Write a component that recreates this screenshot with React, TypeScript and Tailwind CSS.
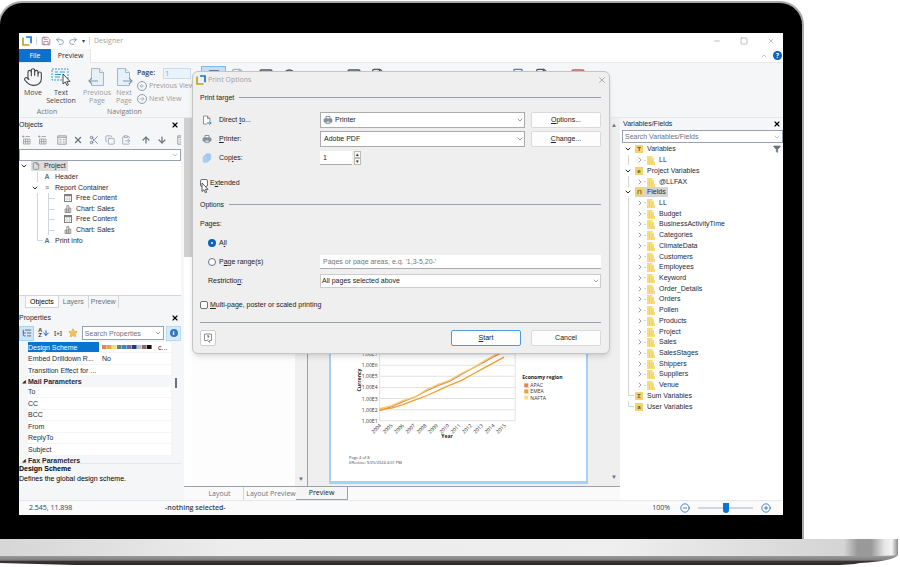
import React from 'react'
import {
  ArrowDown,
  ArrowLeft,
  ArrowRight,
  ArrowUp,
  ChevronDown,
  ChevronRight,
  ChevronUp,
  CirclePlus,
  CircleMinus,
  ClipboardPaste,
  Copy,
  File,
  Funnel,
  Hand,
  ListTree,
  Minus,
  Printer,
  Redo2,
  Save,
  Scissors,
  Search,
  Square,
  Star,
  Undo2,
  X
} from 'lucide-react'

const Logo: React.FC<{ className?: string }> = ({ className }) => (
  <svg viewBox="0 0 10 10" className={className} aria-hidden="true">
    <path d="M1 1.600V9h6.500" fill="none" stroke="#b3ab1e" strokeWidth="1.700" />
    <path d="M4 1h5v6.200" fill="none" stroke="#1478d4" strokeWidth="1.700" />
  </svg>
)

const PageArrow: React.FC<{ back?: boolean }> = ({ back }) => (
  <svg viewBox="0 0 18 20" className="h-5 w-[18px]" fill="#e6f0f8" stroke="#9db9cf" aria-hidden="true">
    <path d={back ? 'M3.5 11V1.5h8l4 4v13h-12V17' : 'M14.500 11V5.500l-4-4h-8v17h12V17'} />
    <path d={back ? 'M11.500 1.500v4h4' : 'M10.500 1.500v4h4'} />
    <path
      d={back ? 'M10 14H1m3-3-3 3 3 3' : 'M8 14h9m-3-3 3 3-3 3'}
      fill="none"
      stroke="#7f97aa"
      strokeWidth="1.2"
    />
  </svg>
)

const Cursor: React.FC<{ className?: string }> = ({ className }) => (
  <svg viewBox="0 0 8 12" className={className} aria-hidden="true">
    <path d="M1 1v8.500l2-1.700 1.400 3 1.300-.6-1.300-2.900H7z" fill="#fff" stroke="#333" strokeWidth=".8" />
  </svg>
)

const TextSelectIcon = () => (
  <svg viewBox="0 0 20 20" className="h-5 w-5" aria-hidden="true">
    <rect x="1" y="2" width="16" height="11" fill="#eef6fd" stroke="#3b97dc" strokeDasharray="2 1" />
    <path d="M4 5h3M9 5h5M4 7.500h6M4 10h5" stroke="#3b97dc" />
    <path d="M12 7v10l2.300-2 1.600 3.500 1.500-.7-1.600-3.400H19z" fill="#fff" stroke="#333" strokeWidth=".9" />
  </svg>
)

const PrinterIcon = () => (
  <svg viewBox="0 0 10 10" className="size-2.5 shrink-0" aria-hidden="true">
    <path d="M3 4V1.500h4V4" fill="#fff" stroke="#777" strokeWidth=".8" />
    <rect x="1" y="3.800" width="8" height="3.500" rx="1" fill="#8b9aa6" stroke="#65727c" strokeWidth=".6" />
    <path d="M3 6h4v2.600H3z" fill="#bfdcf3" stroke="#777" strokeWidth=".6" />
  </svg>
)

const PageExportIcon = () => (
  <svg viewBox="0 0 10 10" className="size-2.5 shrink-0" aria-hidden="true">
    <path d="M5 9H1.500V1H5.500L8 3.500V6M5.500 1v2.500H8" fill="#fff" stroke="#777" strokeWidth=".8" />
    <path d="M5 8h4M7.500 6.300 9.200 8 7.500 9.700" fill="none" stroke="#1d76c4" strokeWidth=".9" />
  </svg>
)

const CopiesIcon = () => (
  <svg viewBox="0 0 10 10" className="size-2.5 shrink-0" fill="#a9cff3" stroke="#8dbdec" strokeWidth=".4" aria-hidden="true">
    <rect x="3.800" y=".6" width="5" height="6.500" rx="1.500" />
    <rect x="2.400" y="1.800" width="5" height="6.500" rx="1.500" />
    <rect x="1" y="3" width="5" height="6.500" rx="1.500" />
  </svg>
)

const FolderIcon = () => (
  <svg viewBox="0 0 8 10" className="h-2.5 w-2 shrink-0" aria-hidden="true">
    <path d="M0 1h5.500v2H7v4h1v3H0z" fill="#f9dc7b" />
    <path d="M2.500 3v6M5 5v4.500" stroke="#efc65a" strokeWidth=".7" />
  </svg>
)

const TableIcon = () => (
  <svg viewBox="0 0 8 8" className="size-2 shrink-0" aria-hidden="true">
    <rect x=".5" y=".5" width="7" height="7" fill="#fff" stroke="#808080" />
    <path d="M.5 1.500h7" stroke="#808080" strokeWidth="1.500" />
    <path d="M3 2v5.500M5.500 2v5.500M1 5h6" stroke="#bcbcbc" strokeWidth=".6" />
  </svg>
)

const BarsIcon = () => (
  <svg viewBox="0 0 8 8" className="size-2 shrink-0" fill="#eee" stroke="#777" strokeWidth=".7" aria-hidden="true">
    <path d="M1 4h1.800v3.500H1zM2.800.6h2v6.900h-2zM4.800 3h2v4.500h-2z" />
  </svg>
)

const InsertIcon = () => (
  <svg viewBox="0 0 10 10" className="size-2.5 shrink-0" fill="none" stroke="#999" strokeWidth=".8" aria-hidden="true">
    <path d="M1 1.500h2.500M2.200.4v2.300M4.500 1.500H9M2.500 4h6.500v5H2.500zM4.500 4v5M6.700 4v5M2.500 6.500H9" />
  </svg>
)

const FormIcon = () => (
  <svg viewBox="0 0 10 10" className="size-2.5 shrink-0" fill="none" stroke="#8c8c8c" strokeWidth=".8" aria-hidden="true">
    <path d="M.8.8h8.400v8.400H.8zM.8 2.300h8.400M2.500 4.700h2M2.500 7h2M5.800 4.700h2M5.800 7h2" />
  </svg>
)

interface FieldNode {
  label: string
  glyph?: string
  depth: number
  open?: boolean
  selected?: boolean
}

const tables = [
  'LL',
  'Budget',
  'BusinessActivityTime',
  'Categories',
  'ClimateData',
  'Customers',
  'Employees',
  'Keyword',
  'Order_Details',
  'Orders',
  'Pollen',
  'Products',
  'Project',
  'Sales',
  'SalesStages',
  'Shippers',
  'Suppliers',
  'Venue'
]

const fieldNodes: FieldNode[] = [
  { label: 'Variables', glyph: 'T', depth: 0, open: true },
  { label: 'LL', depth: 1 },
  { label: 'Project Variables', glyph: 'e', depth: 0, open: true },
  { label: '@LLFAX', depth: 1 },
  { label: 'Fields', glyph: '⊓', depth: 0, open: true, selected: true },
  ...tables.map((label) => ({ label, depth: 1 })),
  { label: 'Sum Variables', glyph: 'Σ', depth: 0 },
  { label: 'User Variables', glyph: 'a', depth: 0 }
]

const reportNodes = [
  { label: 'Free Content', icon: <TableIcon /> },
  { label: 'Chart: Sales', icon: <BarsIcon /> },
  { label: 'Free Content', icon: <TableIcon /> },
  { label: 'Chart: Sales', icon: <BarsIcon /> }
]

const swatches = ['#e5825c', '#f0a22e', '#f7dc6f', '#6f7f7a', '#2f86d1', '#7d6a94', '#173f87', '#b9bdc2', '#8a6a6c', '#111111']

const years = ['2004', '2005', '2006', '2007', '2008', '2009', '2010', '2011', '2012', '2013', '2014', '2015']

const TitleBar = () => (
  <header className="flex h-4 shrink-0 items-center bg-white pl-[3px] text-[#a0a0a0]">
    <Logo className="size-2.5" />
    <span className="ml-1 h-2 border-l border-gray-300" />
    <button aria-label="Save" className="ml-1"><Save className="size-2.5 text-[#a5708c]" /></button>
    <button aria-label="Undo" className="ml-1"><Undo2 className="size-2.5 text-[#7c93b5]" /></button>
    <button aria-label="Redo" className="ml-[3px]"><Redo2 className="size-2.5 text-[#7c93b5]" /></button>
    <span className="ml-1 text-[6px] text-gray-700">▾</span>
    <span className="ml-1 h-2 border-l border-gray-300" />
    <h1 className="ml-1 font-['Open_Sans',sans-serif] text-[7px]">Designer</h1>
    <div className="ml-auto flex gap-[19px] pr-2">
      <button aria-label="Minimize"><Minus className="size-2" /></button>
      <button aria-label="Maximize"><Square className="size-2" /></button>
      <button aria-label="Close"><X className="size-2" /></button>
    </div>
  </header>
)

const Tabs = () => (
  <nav className="flex h-3.5 shrink-0 border-b border-gray-200 bg-white font-['Open_Sans',sans-serif]">
    <button className="w-8 bg-[#0f6fca] text-white">File</button>
    <button className="-mb-px w-10 border-r border-gray-200 bg-[#f5f6f7] text-gray-800">Preview</button>
    <div className="ml-auto flex items-center gap-[5px] pr-px">
      <button aria-label="Collapse ribbon"><ChevronUp className="size-2 text-gray-400" /></button>
      <button aria-label="Help" className="flex size-[9px] items-center justify-center rounded-full bg-[#0b63bd] text-[7px] font-bold leading-none text-white">?</button>
    </div>
  </nav>
)

const RibbonButton: React.FC<{ icon: React.ReactNode; label: string; disabled?: boolean; className: string }> = ({
  icon,
  label,
  disabled,
  className
}) => (
  <button className={`flex flex-col items-center leading-2 ${disabled ? 'text-[#9a9a9a]' : 'text-[#444]'} ${className}`}>
    {icon}
    <span className="mt-0.5">{label}</span>
  </button>
)

const Ribbon = () => (
  <section className="flex h-[55px] shrink-0 border-b border-gray-200 bg-[#f4f6f8] pt-1 font-['Open_Sans',sans-serif] text-[7px]">
    <div className="flex flex-col">
      <div className="flex">
        <RibbonButton className="w-7" label="Move" icon={<Hand className="size-5 text-[#444]" strokeWidth={1.3} />} />
        <RibbonButton className="w-7" label="Text Selection" icon={<TextSelectIcon />} />
      </div>
      <p className="mt-auto text-center leading-[11px] text-[#777]">Action</p>
    </div>
    <div className="ml-2 flex w-[110px] shrink-0 flex-col">
      <div className="flex">
        <RibbonButton disabled className="w-7 px-1" label="Previous Page" icon={<PageArrow back />} />
        <RibbonButton disabled className="w-7 px-1" label="Next Page" icon={<PageArrow />} />
        <div className="flex flex-1 flex-col">
          <label className="flex h-3 items-center font-semibold text-gray-700">
            Page:
            <input className="ml-2 h-[11px] w-7 border border-[#c9dcee] bg-[#eaf2fa] px-px font-normal text-[#8fa3b5]" defaultValue="1" />
          </label>
          <button className="flex h-[13px] items-center gap-0.5 whitespace-nowrap text-[#9a9a9a]">
            <span className="rounded-full border border-[#8ba0b0] p-px"><ArrowLeft className="size-1.5 text-[#6d8496]" /></span>
            Previous View
          </button>
          <button className="flex h-[13px] items-center gap-0.5 whitespace-nowrap text-[#9a9a9a]">
            <span className="rounded-full border border-[#8ba0b0] p-px"><ArrowRight className="size-1.5 text-[#6d8496]" /></span>
            Next View
          </button>
        </div>
      </div>
      <p className="mt-auto pl-6 leading-[11px] text-[#777]">Navigation</p>
    </div>
    <div className="-mt-px ml-2 flex h-5 items-start text-gray-600">
      <span className="flex h-5 w-[25px] justify-center border border-[#7fb7e6] bg-[#c3e0f8] pt-0.5"><Square className="size-3.5" /></span>
      <File className="ml-1 mt-0.5 size-4 text-[#9db9cf]" />
      <Square className="ml-3 mt-0.5 size-4" />
      <Search className="ml-2 mt-0.5 size-4" />
      <Square className="ml-12 mt-0.5 size-4" />
      <File className="ml-2 mt-0.5 size-4" />
      <Printer className="ml-31 mt-0.5 size-4 text-[#5a7ba8]" />
      <File className="ml-2 mt-0.5 size-4" />
      <Square className="ml-5 mt-0.5 size-4 text-[#b9645a]" />
    </div>
  </section>
)

const PanelTitle: React.FC<{ title: string }> = ({ title }) => (
  <div className="flex h-3 shrink-0 items-center justify-between pr-0.5 text-gray-800">
    <h2>{title}</h2>
    <button aria-label={`Close ${title}`}><X className="size-2 text-black" strokeWidth={3.5} /></button>
  </div>
)

const ObjectTree = () => (
  <ul className="grid h-[85px] auto-rows-fr leading-[10px] text-gray-800">
    <li className="flex items-center pl-px">
      <ChevronDown className="size-2" strokeWidth={3} />
      <span className="ml-[3px] flex h-[10px] items-center gap-1 bg-[#dcdcdc] pl-px pr-0.5">
        <File className="size-2 text-gray-500" />
        Project
      </span>
    </li>
    <li className="flex items-center pl-[18px]">
      <span className="h-full w-1.5 border-l border-gray-300" />
      <span className="w-2 text-center font-bold text-gray-500">A</span>
      <span className="ml-1">Header</span>
    </li>
    <li className="flex items-center pl-3">
      <ChevronDown className="size-2" strokeWidth={3} />
      <span className="ml-1 w-2 text-center font-bold text-gray-500">≡</span>
      <span className="ml-1">Report Container</span>
    </li>
    {reportNodes.map((node, i) => (
      <li key={i} className="flex items-center pl-[18px]">
        <span className="h-full w-[11px] border-l border-gray-300" />
        <span className="h-full w-4 border-l border-gray-300"><span className="mt-[5px] block w-1.5 border-t border-gray-300" /></span>
        {node.icon}
        <span className="ml-1">{node.label}</span>
      </li>
    ))}
    <li className="flex items-center pl-[18px]">
      <span className="h-1/2 w-1.5 self-start border-b border-l border-gray-300" />
      <span className="w-2 text-center font-bold text-gray-500">A</span>
      <span className="ml-1">Print info</span>
    </li>
  </ul>
)

const ObjectsPanel = () => (
  <section className="flex min-h-0 flex-1 flex-col">
    <PanelTitle title="Objects" />
    <div className="flex h-[18px] shrink-0 items-center gap-1.5 overflow-hidden pl-0.5 text-gray-400">
      <InsertIcon />
      <InsertIcon />
      <span className="ml-1"><FormIcon /></span>
      <X className="size-2.5 shrink-0 text-gray-500" strokeWidth={3} />
      <Scissors className="size-2.5 shrink-0 text-gray-500" />
      <Copy className="size-2.5 shrink-0" />
      <ClipboardPaste className="size-2.5 shrink-0" />
      <ArrowUp className="ml-1 size-2.5 shrink-0 text-gray-500" strokeWidth={3} />
      <ArrowDown className="size-2.5 shrink-0 text-gray-500" strokeWidth={3} />
      <span className="ml-1"><FormIcon /></span>
    </div>
    <div className="flex min-h-0 flex-1 flex-col bg-white">
      <div className="relative h-3 shrink-0 border border-gray-400">
        <select aria-label="Object filter" className="block size-full appearance-none bg-white" />
        <ChevronDown className="pointer-events-none absolute right-px top-px size-2 text-gray-400" />
      </div>
      <ObjectTree />
    </div>
    <div className="flex h-[13px] shrink-0 border-t border-gray-300 pl-1.5 text-gray-500">
      <button className="border-x border-b border-gray-300 bg-white px-1 text-black">Objects</button>
      <button className="border-r border-gray-300 px-1">Layers</button>
      <button className="border-r border-gray-300 px-0.5">Preview</button>
    </div>
  </section>
)

const mailRows = ['To', 'CC', 'BCC', 'From', 'ReplyTo', 'Subject']

const PropertiesPanel = () => (
  <section className="mt-1 flex shrink-0 flex-col">
    <PanelTitle title="Properties" />
    <div className="flex h-[18px] items-center">
      <button aria-label="Group by category" className="flex h-[15px] w-[15px] items-center justify-center border border-[#a9d1f2] bg-[#cde6fa]">
        <ListTree className="size-2.5 text-gray-600" />
      </button>
      <button aria-label="Sort" className="ml-1 flex items-center font-bold text-gray-700">
        <span className="text-[6px] leading-[5px]">A<br />Z</span>
        <ArrowDown className="size-2 text-[#1d5fa8]" strokeWidth={3} />
      </button>
      <button className="ml-1 text-[6px] font-bold text-gray-700">[+]</button>
      <button aria-label="Favorites" className="ml-1.5"><Star className="size-2.5 fill-[#f0c25b] text-[#e2b250]" /></button>
      <div className="relative ml-1 h-3.5 min-w-0 flex-1">
        <input aria-label="Search Properties" placeholder="Search Properties" className="size-full border border-gray-400 bg-white px-0.5 placeholder:text-gray-500" />
        <ChevronDown className="absolute right-0.5 top-[3px] size-2 text-gray-500" />
      </div>
      <button aria-label="Info" className="ml-0.5 flex h-[15px] w-[15px] items-center justify-center border border-[#b9daf5] bg-[#d6eafa]">
        <span className="flex size-2 items-center justify-center rounded-full bg-[#2f79bd] font-['Liberation_Serif',serif] text-[7px] font-bold leading-none text-white">i</span>
      </button>
    </div>
    <div className="flex h-[121px] overflow-hidden">
      <div className="min-w-0 flex-1">
        <table className="h-[124px] w-full table-fixed border-collapse leading-[9px] text-gray-800">
          <tbody>
            <tr>
              <td className="w-[9px] p-0" />
              <td className="w-[71px] whitespace-nowrap border-b border-gray-100 bg-[#0a74d1] p-0 text-white">Design Scheme</td>
              <td className="border-b border-gray-100 bg-white p-0 pl-[3px]">
                <span className="flex items-center">
                  {swatches.map((color) => (
                    <span key={color} className="h-1 w-[5px] border-r border-white/40" style={{ backgroundColor: color }} />
                  ))}
                  <span className="ml-1.5">c...</span>
                </span>
              </td>
            </tr>
            <tr>
              <td className="p-0" />
              <td className="whitespace-nowrap border-b border-gray-100 bg-white p-0">Embed Drilldown R...</td>
              <td className="border-b border-gray-100 bg-white p-0 pl-[3px]">No</td>
            </tr>
            <tr>
              <td className="p-0" />
              <td className="whitespace-nowrap border-b border-gray-100 bg-white p-0">Transition Effect for ...</td>
              <td className="border-b border-gray-100 bg-white p-0" />
            </tr>
            <tr>
              <td className="p-0 text-center text-[5px]">◢</td>
              <td colSpan={2} className="p-0 font-bold">Mail Parameters</td>
            </tr>
            {mailRows.map((label) => (
              <tr key={label}>
                <td className="p-0" />
                <td className="border-b border-gray-100 bg-white p-0">{label}</td>
                <td className="border-b border-gray-100 bg-white p-0" />
              </tr>
            ))}
            <tr>
              <td className="p-0 text-center text-[5px]">◢</td>
              <td colSpan={2} className="p-0 font-bold">Fax Parameters</td>
            </tr>
          </tbody>
        </table>
      </div>
      <div className="w-2.5 pl-1 pt-9"><div className="h-2.5 w-0.5 bg-gray-500" /></div>
    </div>
    <div className="h-[37px] border-t border-gray-200 leading-[10px]">
      <p className="font-bold text-black">Design Scheme</p>
      <p>Defines the global design scheme.</p>
    </div>
  </section>
)

const Chart = () => (
  <svg viewBox="0 0 252 94" className="w-full font-['Open_Sans',sans-serif]" role="img" aria-label="Sales by economy region">
    <g stroke="#e2e2e2" strokeWidth="1">
      {[2, 13, 24, 35, 46, 57, 68].map((y) => (
        <line key={y} x1="48" x2="182" y1={y} y2={y} />
      ))}
      <line x1="48" x2="48" y1="0" y2="68" />
      <line x1="182" x2="182" y1="0" y2="68" />
    </g>
    <g fontSize="5" fill="#333" textAnchor="end">
      {['1.00E7', '1.00E6', '1.00E5', '1.00E4', '1.00E3', '1.00E2', '1.00E1'].map((t, i) => (
        <text key={t} x="46" y={4 + i * 11}>{t}</text>
      ))}
      {years.map((t, i) => (
        <text key={t} transform={`translate(${50 + i * 11.2} 73) rotate(-45)`}>{t}</text>
      ))}
    </g>
    <g fontSize="5" fontWeight="700" fill="#222">
      <text transform="translate(30 39) rotate(-90)">Currency</text>
      <text x="109" y="85">Year</text>
      <text x="189" y="27">Economy region</text>
    </g>
    <g fill="none" strokeWidth="1.3">
      <path d="M48 58 60 54 71 49 84 44 95 38 106 33 117 29 129 22 140 16 151 10 162 4 170 0" stroke="#e5825c" />
      <path d="M48 56 60 53 71 48 84 44 95 37 106 32 117 28 129 21 140 16 151 9 162 3 168 0" stroke="#f3ce6a" />
      <path d="M48 57 60 55.500 71 52 84 47 95 43 106 38 117 33 129 28 140 22 151 16 162 10 171 5" stroke="#efa02c" />
    </g>
    <g fontSize="5" fill="#333">
      <rect x="191" y="31" width="4" height="4" fill="#e5825c" />
      <text x="197" y="35">APAC</text>
      <rect x="191" y="37" width="4" height="4" fill="#efa02c" />
      <text x="197" y="41">EMEA</text>
      <rect x="191" y="43" width="4" height="4" fill="#f7dc8a" />
      <text x="197" y="47">NAFTA</text>
    </g>
  </svg>
)

const Workspace = () => (
  <main className="flex min-w-0 flex-1 flex-col">
    <div className="flex min-h-0 flex-1 border-b border-gray-400">
      <div className="w-2 bg-white"><div className="h-[139px] bg-[#cfcfcf]" /></div>
      <div className="flex w-[103px] shrink-0 bg-[#fdfdfd]" />
      <div className="flex w-[13px] shrink-0 items-end justify-center border-r border-gray-400 bg-[#f1f1f1] pb-1 text-[6px] leading-none text-gray-500">▼</div>
      <div className="flex min-w-0 flex-1 bg-[#efefef] pb-0.5 pl-[21px]">
        <div className="flex flex-1 flex-col justify-end border-x-2 border-b-[3px] border-[#a9d0f2] bg-white">
          <Chart />
          <div className="mb-4 mt-2 pl-[18px] font-['Open_Sans',sans-serif] text-[4px] leading-[5px] text-gray-700">
            <p>Page 4 of 8</p>
            <p>Effective: 9/25/2024 4:01 PM</p>
          </div>
        </div>
        <div className="flex w-8 flex-col items-end justify-between py-1 pr-[3px] text-[6px] leading-none text-gray-500">
          <span>▲</span>
          <span>▼</span>
        </div>
      </div>
    </div>
    <div className="flex h-[13px] shrink-0 bg-[#fafafa] pl-1 font-['Open_Sans',sans-serif] text-gray-500">
      <button className="w-14 border-r border-gray-300 pl-2">Layout</button>
      <button className="w-[52px] whitespace-nowrap pl-0.5">Layout Preview</button>
      <button className="w-[52px] border-b border-r border-gray-400 bg-[#f5f5f5] text-gray-900">Preview</button>
    </div>
  </main>
)

const FieldsPanel = () => (
  <aside className="flex w-[163px] shrink-0 flex-col bg-white text-gray-800">
    <div className="bg-[#f4f6f8] pl-[3px]"><PanelTitle title="Variables/Fields" /></div>
    <div className="relative ml-0.5 h-[13px] shrink-0">
      <input aria-label="Search Variables/Fields" placeholder="Search Variables/Fields" className="block size-full border border-gray-400 bg-white px-0.5 placeholder:text-gray-500" />
      <ChevronDown className="absolute right-0.5 top-[3px] size-2 text-gray-400" />
    </div>
    <div className="relative pt-px">
      <Funnel className="absolute right-0.5 top-0.5 size-2 fill-gray-500 text-gray-500" />
      <ul className="grid h-[268px] auto-rows-fr pl-1 leading-[10px]">
        {fieldNodes.map((node, i) => (
          <li key={i} className="flex items-center">
            {node.depth === 0 ? (
              <>
                <span className="flex h-full w-2.5 items-center">
                  {node.open ? (
                    <ChevronDown className="size-2" strokeWidth={3} />
                  ) : (
                    <span className="ml-1 h-1/2 w-1.5 self-start border-b border-l border-gray-300" />
                  )}
                </span>
                <span className={`ml-px flex h-2.5 items-center gap-1 pr-0.5 ${node.selected ? 'bg-[#d4d4d8]' : ''}`}>
                  <span className="flex h-2 w-2 items-center justify-center bg-[#f9d265] text-[6px] font-bold leading-none text-gray-600">{node.glyph}</span>
                  {node.label}
                </span>
              </>
            ) : (
              <>
                <span className="ml-1 h-full w-2 border-l border-gray-300" />
                <ChevronRight className="size-2 text-gray-500" />
                <span className="mr-px w-0.5 border-t border-gray-300" />
                <FolderIcon />
                <span className="ml-1">{node.label}</span>
              </>
            )}
          </li>
        ))}
      </ul>
    </div>
  </aside>
)

const StatusBar = () => (
  <footer className="flex h-[15px] shrink-0 items-center border-t border-gray-200 bg-[#fafafa] font-['Open_Sans',sans-serif] text-gray-700">
    <span className="w-32 pl-2.5">2.545, 11.898</span>
    <span className="pl-[18px] font-semibold">-nothing selected-</span>
    <div className="ml-auto flex items-center pr-3">
      <span>100%</span>
      <button aria-label="Zoom out" className="ml-2.5"><CircleMinus className="size-2.5 text-[#2a6fb8]" /></button>
      <input
        type="range"
        aria-label="Zoom"
        defaultValue={50}
        className="mx-2 h-0.5 w-[55px] appearance-none bg-gray-300 [&::-webkit-slider-thumb]:h-2.5 [&::-webkit-slider-thumb]:w-1.5 [&::-webkit-slider-thumb]:appearance-none [&::-webkit-slider-thumb]:rounded-b-sm [&::-webkit-slider-thumb]:bg-[#0a74d1]"
      />
      <button aria-label="Zoom in"><CirclePlus className="size-2.5 text-[#2a6fb8]" /></button>
    </div>
  </footer>
)

const GroupHeading: React.FC<{ children: React.ReactNode }> = ({ children }) => (
  <div className="flex h-[19px] items-center gap-[5px]">
    <h3>{children}</h3>
    <span className="flex-1 border-t border-gray-400" />
  </div>
)

const FormRow: React.FC<{ children: React.ReactNode }> = ({ children }) => (
  <div className="flex h-[19px] items-center">{children}</div>
)

const DialogButton: React.FC<{ children: React.ReactNode; primary?: boolean; className?: string }> = ({
  children,
  primary,
  className = ''
}) => (
  <button
    className={`h-4 w-[70px] shrink-0 rounded-xs border bg-[#fdfdfd] ${primary ? 'border-[#4b9be0]' : 'border-[#dadada]'} ${className}`}
  >
    {children}
  </button>
)

const PrintDialog = () => (
  <div
    role="dialog"
    aria-label="Print Options"
    className="absolute left-[173px] top-[38px] w-[418px] rounded-md border border-[#c4c4c4] bg-[#efefef] pb-[7px] pl-[7px] pr-2 text-[#222] shadow-md"
  >
    <div className="-ml-1 -mr-1.5 flex h-4 items-center">
      <Logo className="size-2.5" />
      <h2 className="ml-0.5 font-['Open_Sans',sans-serif] text-[7px] text-[#a0a0a0]">Print Options</h2>
      <button aria-label="Close dialog" className="ml-auto"><X className="size-2.5 text-gray-400" /></button>
    </div>
    <GroupHeading>Print target</GroupHeading>
    <div className="pt-[3px]">
      <FormRow>
        <label htmlFor="direct" className="flex w-[120px] shrink-0 items-center gap-[7px] pl-0.5">
          <PageExportIcon />
          <span>Direct <u>t</u>o...</span>
        </label>
        <span className="relative h-4 flex-1">
          <select id="direct" className="block size-full appearance-none border border-[#ababab] bg-white pl-3.5">
            <option>Printer</option>
          </select>
          <span className="pointer-events-none absolute left-[3px] top-[3px]"><PrinterIcon /></span>
          <ChevronDown className="pointer-events-none absolute right-px top-1 size-2 text-gray-500" />
        </span>
        <DialogButton className="ml-1.5"><u>O</u>ptions...</DialogButton>
      </FormRow>
      <FormRow>
        <label htmlFor="printer" className="flex w-[120px] shrink-0 items-center gap-[7px] pl-0.5">
          <PrinterIcon />
          <span><u>P</u>rinter:</span>
        </label>
        <span className="relative h-4 flex-1">
          <select id="printer" className="block size-full appearance-none border border-[#ababab] bg-white pl-[3px]">
            <option>Adobe PDF</option>
          </select>
          <ChevronDown className="pointer-events-none absolute right-px top-1 size-2 text-gray-500" />
        </span>
        <DialogButton className="ml-1.5"><u>C</u>hange...</DialogButton>
      </FormRow>
      <FormRow>
        <label htmlFor="copies" className="flex w-[120px] shrink-0 items-center gap-[7px] pl-0.5">
          <CopiesIcon />
          <span>Cop<u>i</u>es:</span>
        </label>
        <input id="copies" defaultValue="1" className="h-3.5 w-8 border-b border-[#ababab] bg-white px-[3px]" />
        <span className="ml-0.5 flex w-[7px] flex-col text-[5px]">
          <button aria-label="More copies" className="h-[7px] border border-[#bbb] bg-[#f6f6f6] leading-[5px]">▴</button>
          <button aria-label="Fewer copies" className="h-[7px] border border-[#bbb] bg-[#f6f6f6] leading-[5px]">▾</button>
        </span>
      </FormRow>
    </div>
    <label className="relative mt-[9px] flex h-3.5 items-center gap-0.5">
      <input type="checkbox" className="size-2 appearance-none rounded-xs border border-gray-500 bg-white" />
      <span>E<u>x</u>tended</span>
      <Cursor className="absolute left-px top-1.5 h-3 w-2" />
    </label>
    <div className="mt-[5px]">
      <GroupHeading>Options</GroupHeading>
    </div>
    <FormRow>Pages:</FormRow>
    <FormRow>
      <label className="flex items-center gap-[3px] pl-2">
        <input type="radio" name="pages" defaultChecked className="size-2 appearance-none rounded-full border border-gray-500 bg-white checked:border-3 checked:border-[#0b63bd]" />
        <span>A<u>l</u>l</span>
      </label>
    </FormRow>
    <FormRow>
      <label className="flex w-[120px] shrink-0 items-center gap-[3px] pl-2">
        <input type="radio" name="pages" className="size-2 appearance-none rounded-full border border-gray-500 bg-white" />
        <span>P<u>a</u>ge range(s)</span>
      </label>
      <input aria-label="Page range" placeholder="Pages or page areas, e.g. '1,3-5,20-'" className="h-3.5 flex-1 border-b border-[#ababab] bg-white px-[3px] placeholder:text-[#777]" />
    </FormRow>
    <FormRow>
      <label htmlFor="restriction" className="w-[120px] shrink-0 pl-2">Restrictio<u>n</u>:</label>
      <span className="relative h-3.5 flex-1">
        <select id="restriction" className="block size-full appearance-none border border-[#ccc] bg-white pl-px">
          <option>All pages selected above</option>
        </select>
        <ChevronDown className="pointer-events-none absolute right-px top-[3px] size-2 text-gray-500" />
      </span>
    </FormRow>
    <label className="mt-[7px] flex h-[15px] items-center gap-0.5">
      <input type="checkbox" className="size-2 appearance-none rounded-xs border border-gray-500 bg-white" />
      <span><u>M</u>ulti-page, poster or scaled printing</span>
    </label>
    <div className="mt-2.5 flex border-t border-gray-400 pt-[7px]">
      <button aria-label="Help" className="flex size-4 items-center justify-center rounded-xs border border-[#cfcfcf] bg-white">
        <svg viewBox="0 0 10 10" className="size-2.5" aria-hidden="true">
          <path d="M1.500 1h7v6.500H6.500v2l-2-2h-3z" fill="none" stroke="#666" strokeWidth=".7" />
          <path d="M4 3.200q1-1.200 2 0 0 .8-1 1.200v.6M5 6v.6" fill="none" stroke="#444" strokeWidth=".8" />
        </svg>
      </button>
      <DialogButton primary className="ml-auto"><u>S</u>tart</DialogButton>
      <DialogButton className="ml-2.5">Cancel</DialogButton>
    </div>
  </div>
)

const LaptopBase = () => (
  <svg viewBox="0 0 900 28" preserveAspectRatio="none" className="h-7 w-full shrink-0" aria-hidden="true">
    <defs>
      <linearGradient id="metal" x1="0" x2="1" y1="0" y2="0">
        <stop offset="0" stopColor="#d6d6d6" />
        <stop offset=".25" stopColor="#ececec" />
        <stop offset=".68" stopColor="#efefef" />
        <stop offset=".94" stopColor="#d4d4d4" />
        <stop offset=".955" stopColor="#999" />
        <stop offset=".97" stopColor="#999" />
        <stop offset=".985" stopColor="#e6e6e6" />
        <stop offset=".993" stopColor="#f3f3f3" />
        <stop offset="1" stopColor="#8a8a8a" />
      </linearGradient>
      <linearGradient id="edge" x1="0" x2="0" y1="0" y2="1">
        <stop offset="0" stopColor="#a0a0a0" />
        <stop offset=".5" stopColor="#808080" />
        <stop offset=".65" stopColor="#3a3434" />
        <stop offset="1" stopColor="#2c2626" />
      </linearGradient>
    </defs>
    <path d="M0 16h898q-4 6-38 8-10 2-30 2H75L0 24z" fill="url(#edge)" />
    <path d="M0 0h898v16q-10 1-30 1H0z" fill="url(#metal)" />
  </svg>
)

const App = () => (
  <div className="flex h-screen flex-col overflow-hidden bg-white pt-px">
    <div className="-ml-0.5 mr-24 flex min-h-0 flex-1 flex-col rounded-t-3xl border-x-2 border-t-2 border-[#a9a9a9] bg-black px-[19px] pb-6 pt-[30px]">
      <div className="relative flex min-h-0 flex-1 flex-col bg-[#f4f6f8] font-['Liberation_Sans',Arial,sans-serif] text-[7px] leading-[10px]">
        <TitleBar />
        <Tabs />
        <Ribbon />
        <div className="flex min-h-0 flex-1">
          <div className="flex w-[165px] shrink-0 flex-col pr-[3px] pt-px">
            <ObjectsPanel />
            <PropertiesPanel />
          </div>
          <Workspace />
          <FieldsPanel />
        </div>
        <StatusBar />
        <PrintDialog />
      </div>
    </div>
    <LaptopBase />
  </div>
)

export default App
